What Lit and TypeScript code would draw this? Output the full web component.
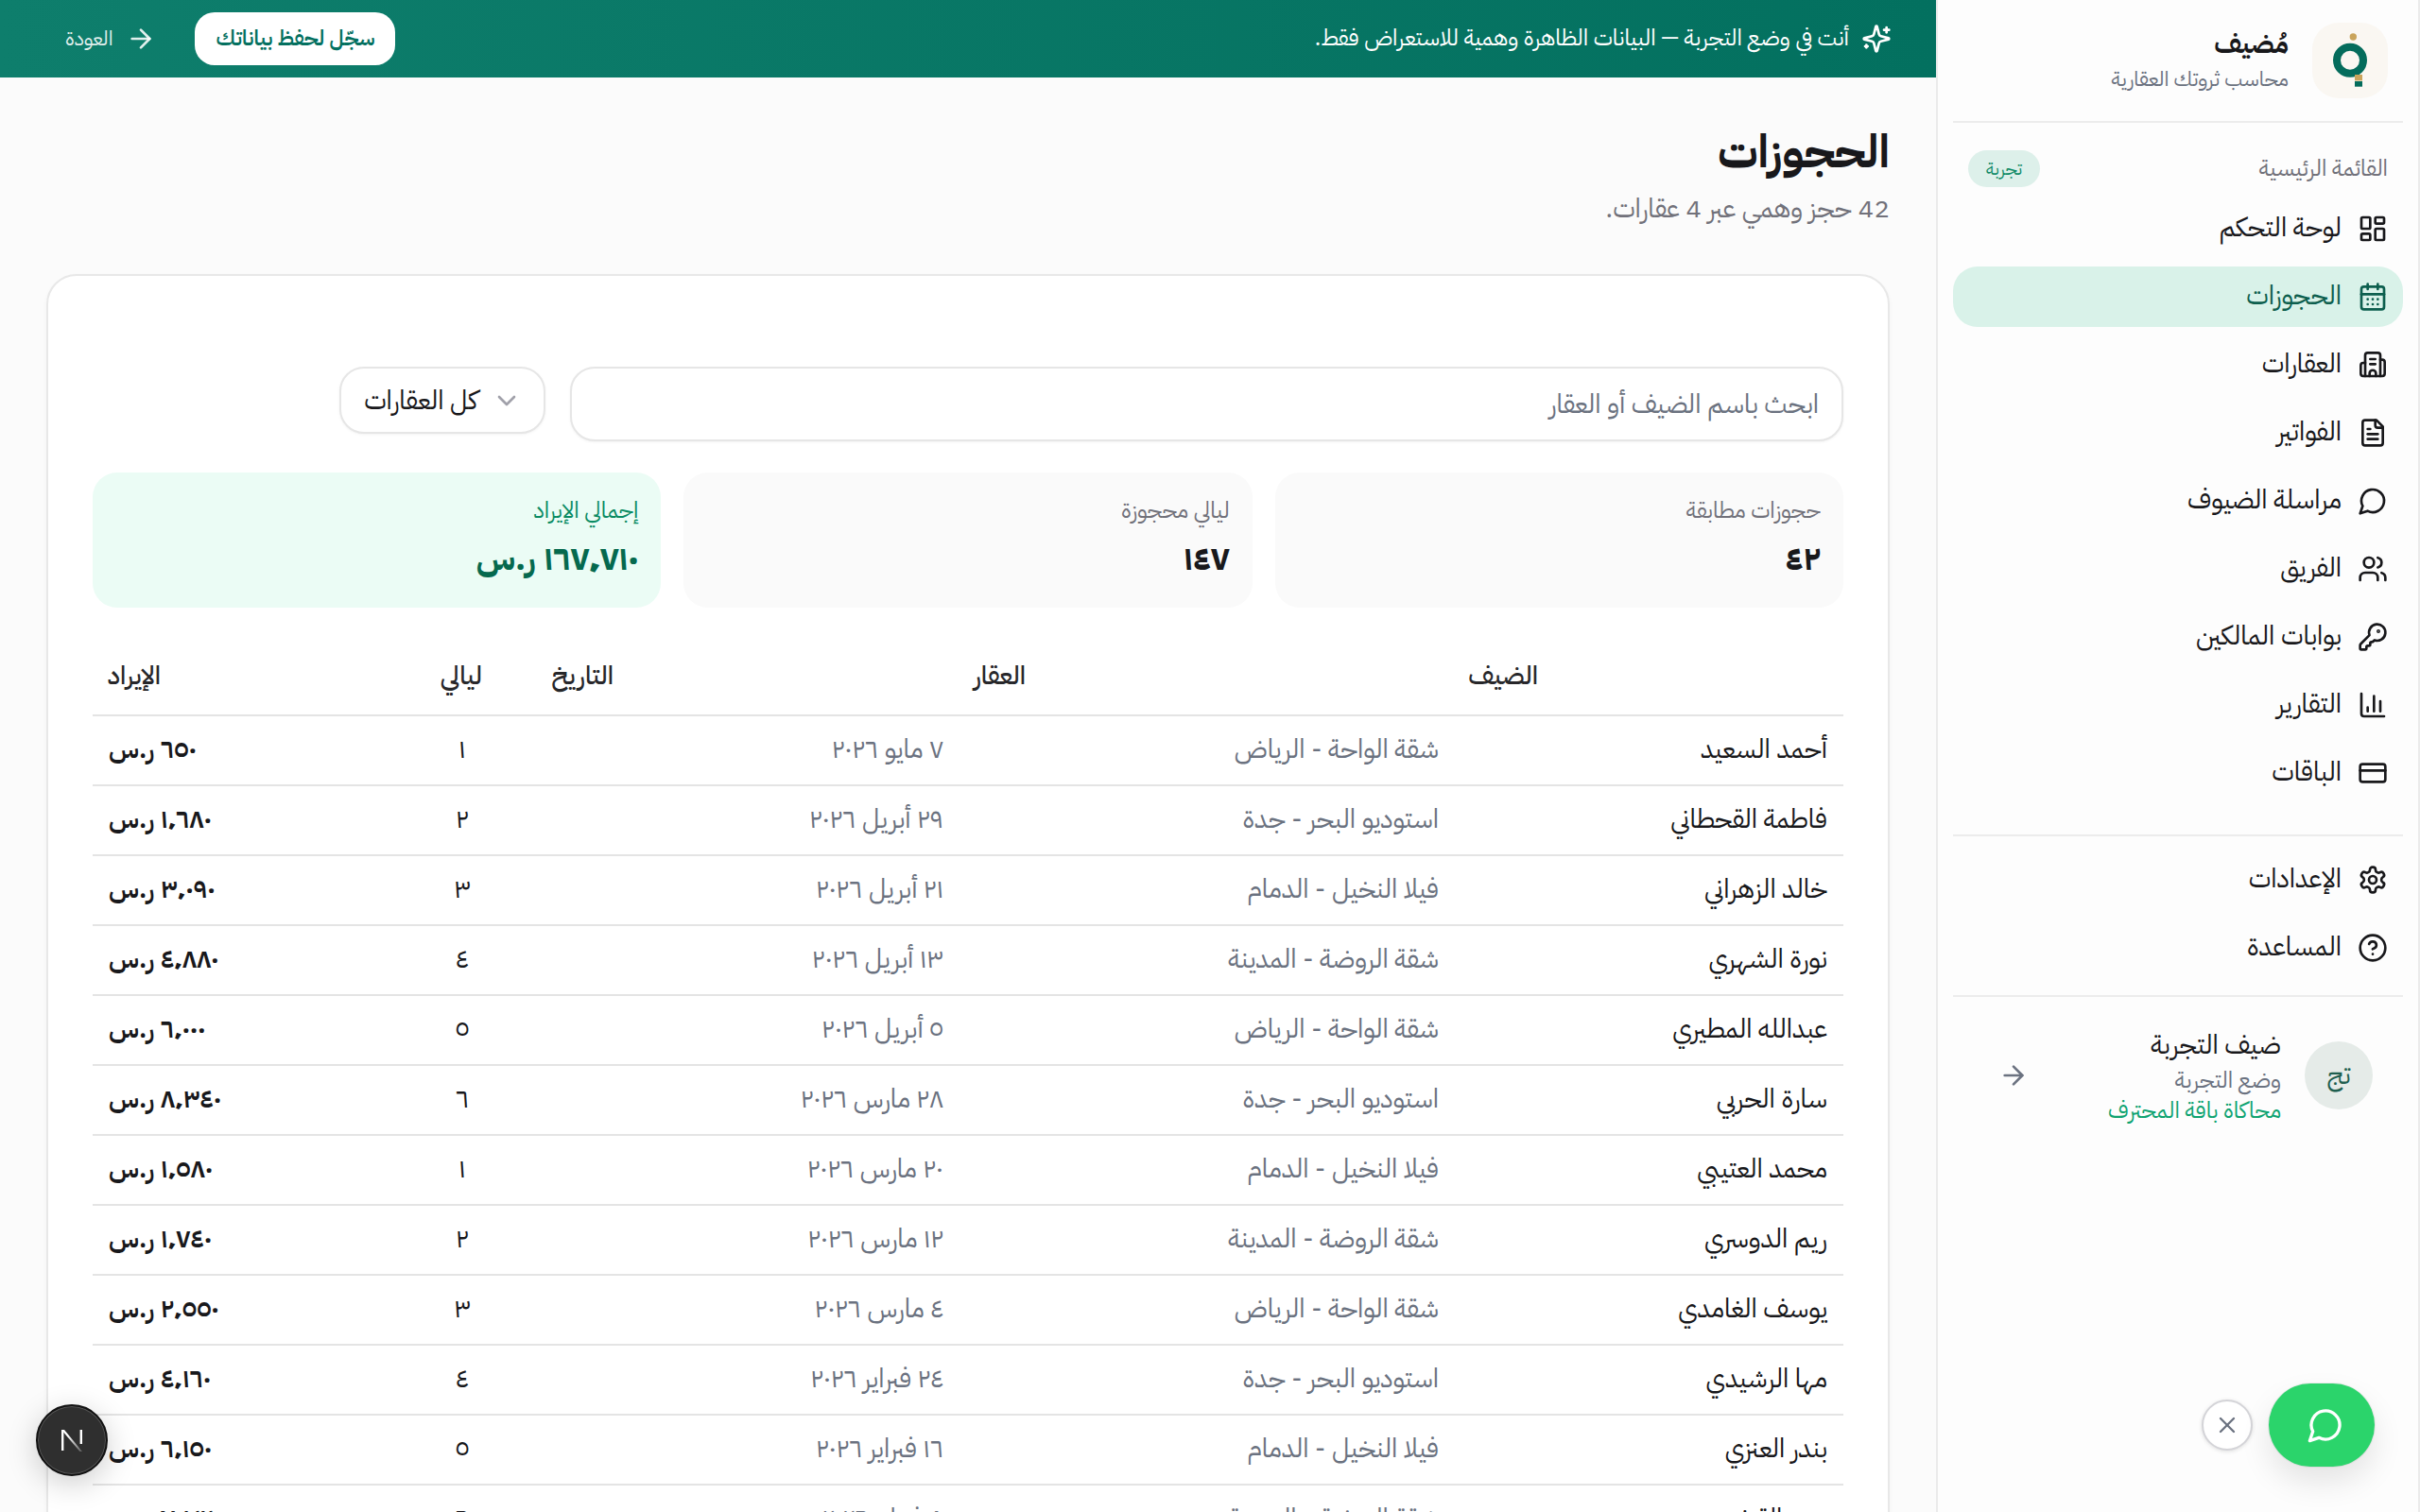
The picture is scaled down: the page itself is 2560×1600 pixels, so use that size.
import { LitElement, html, css, svg } from "lit";
import { customElement } from "lit/decorators.js";

const ic = (body: unknown) => html`<svg class="ic" viewBox="0 0 24 24" fill="none" stroke="currentColor" stroke-width="2" stroke-linecap="round" stroke-linejoin="round">${body}</svg>`;

const icons: Record<string, unknown> = {
  dash: ic(svg`<rect x="3" y="3" width="7" height="9" rx="1"/><rect x="14" y="3" width="7" height="5" rx="1"/><rect x="14" y="12" width="7" height="9" rx="1"/><rect x="3" y="16" width="7" height="5" rx="1"/>`),
  cal: ic(svg`<path d="M8 2v4"/><path d="M16 2v4"/><rect x="3" y="4" width="18" height="18" rx="2"/><path d="M3 10h18"/><path d="M8 14h.01"/><path d="M12 14h.01"/><path d="M16 14h.01"/><path d="M8 18h.01"/><path d="M12 18h.01"/><path d="M16 18h.01"/>`),
  bld: ic(svg`<path d="M6 21V4.5a2 2 0 0 1 2-2h8a2 2 0 0 1 2 2V21"/><path d="M6 10.5H4.5a2 2 0 0 0-2 2V19a2 2 0 0 0 2 2h15a2 2 0 0 0 2-2v-9a2 2 0 0 0-2-2H18"/><path d="M10 7.5h4"/><path d="M10 11.5h4"/><path d="M9.5 21v-2.2a2.5 2.5 0 0 1 5 0V21"/>`),
  file: ic(svg`<path d="M15 2H6a2 2 0 0 0-2 2v16a2 2 0 0 0 2 2h12a2 2 0 0 0 2-2V7Z"/><path d="M14 2v4a2 2 0 0 0 2 2h4"/><path d="M10 9H8"/><path d="M16 13H8"/><path d="M16 17H8"/>`),
  msg: ic(svg`<path d="M7.9 20A9 9 0 1 0 4 16.1L2 22Z"/>`),
  users: ic(svg`<path d="M16 21v-2a4 4 0 0 0-4-4H6a4 4 0 0 0-4 4v2"/><circle cx="9" cy="7" r="4"/><path d="M22 21v-2a4 4 0 0 0-3-3.87"/><path d="M16 3.13a4 4 0 0 1 0 7.75"/>`),
  key: ic(svg`<path d="M2.586 17.414A2 2 0 0 0 2 18.828V21a1 1 0 0 0 1 1h3a1 1 0 0 0 1-1v-1a1 1 0 0 1 1-1h1a1 1 0 0 0 1-1v-1a1 1 0 0 1 1-1h.172a2 2 0 0 0 1.414-.586l.814-.814a6.5 6.5 0 1 0-4-4z"/><circle cx="16.5" cy="7.5" r=".5" fill="currentColor"/>`),
  chart: ic(svg`<path d="M3 3v16a2 2 0 0 0 2 2h16"/><path d="M18 17V9"/><path d="M13 17V5"/><path d="M8 17v-3"/>`),
  card: ic(svg`<rect x="2" y="5" width="20" height="14" rx="2"/><line x1="2" x2="22" y1="10" y2="10"/>`),
  gear: ic(svg`<path d="M12.22 2h-.44a2 2 0 0 0-2 2v.18a2 2 0 0 1-1 1.73l-.43.25a2 2 0 0 1-2 0l-.15-.08a2 2 0 0 0-2.73.73l-.22.38a2 2 0 0 0 .73 2.73l.15.1a2 2 0 0 1 1 1.72v.51a2 2 0 0 1-1 1.74l-.15.09a2 2 0 0 0-.73 2.73l.22.38a2 2 0 0 0 2.73.73l.15-.08a2 2 0 0 1 2 0l.43.25a2 2 0 0 1 1 1.73V20a2 2 0 0 0 2 2h.44a2 2 0 0 0 2-2v-.18a2 2 0 0 1 1-1.73l.43-.25a2 2 0 0 1 2 0l.15.08a2 2 0 0 0 2.73-.73l.22-.39a2 2 0 0 0-.73-2.73l-.15-.08a2 2 0 0 1-1-1.74v-.5a2 2 0 0 1 1-1.74l.15-.09a2 2 0 0 0 .73-2.73l-.22-.38a2 2 0 0 0-2.73-.73l-.15.08a2 2 0 0 1-2 0l-.43-.25a2 2 0 0 1-1-1.73V4a2 2 0 0 0-2-2z"/><circle cx="12" cy="12" r="3"/>`),
  help: ic(svg`<circle cx="12" cy="12" r="10"/><path d="M9.09 9a3 3 0 0 1 5.83 1c0 2-3 3-3 3"/><path d="M12 17h.01"/>`),
  arrow: ic(svg`<path d="M5 12h14"/><path d="m12 5 7 7-7 7"/>`),
  spark: ic(svg`<path d="M9.937 15.5A2 2 0 0 0 8.5 14.063l-6.135-1.582a.5.5 0 0 1 0-.962L8.5 9.936A2 2 0 0 0 9.937 8.5l1.582-6.135a.5.5 0 0 1 .963 0L14.063 8.5A2 2 0 0 0 15.5 9.937l6.135 1.581a.5.5 0 0 1 0 .964L15.5 14.063a2 2 0 0 0-1.437 1.437l-1.582 6.135a.5.5 0 0 1-.963 0z"/><path d="M20 3v4"/><path d="M22 5h-4"/><path d="M4 17v2"/><path d="M5 18H3"/>`),
  chev: ic(svg`<path d="m6 9 6 6 6-6"/>`),
  x: ic(svg`<path d="M18 6 6 18"/><path d="m6 6 12 12"/>`),
};

const mainNav = [
  ["dash", "لوحة التحكم"],
  ["cal", "الحجوزات"],
  ["bld", "العقارات"],
  ["file", "الفواتير"],
  ["msg", "مراسلة الضيوف"],
  ["users", "الفريق"],
  ["key", "بوابات المالكين"],
  ["chart", "التقارير"],
  ["card", "الباقات"],
];
const subNav = [
  ["gear", "الإعدادات"],
  ["help", "المساعدة"],
];

const bookings = [
  ["أحمد السعيد", "شقة الواحة - الرياض", "٧ مايو ٢٠٢٦", "١", "٦٥٠ ر.س"],
  ["فاطمة القحطاني", "استوديو البحر - جدة", "٢٩ أبريل ٢٠٢٦", "٢", "١٬٦٨٠ ر.س"],
  ["خالد الزهراني", "فيلا النخيل - الدمام", "٢١ أبريل ٢٠٢٦", "٣", "٣٬٠٩٠ ر.س"],
  ["نورة الشهري", "شقة الروضة - المدينة", "١٣ أبريل ٢٠٢٦", "٤", "٤٬٨٨٠ ر.س"],
  ["عبدالله المطيري", "شقة الواحة - الرياض", "٥ أبريل ٢٠٢٦", "٥", "٦٬٠٠٠ ر.س"],
  ["سارة الحربي", "استوديو البحر - جدة", "٢٨ مارس ٢٠٢٦", "٦", "٨٬٣٤٠ ر.س"],
  ["محمد العتيبي", "فيلا النخيل - الدمام", "٢٠ مارس ٢٠٢٦", "١", "١٬٥٨٠ ر.س"],
  ["ريم الدوسري", "شقة الروضة - المدينة", "١٢ مارس ٢٠٢٦", "٢", "١٬٧٤٠ ر.س"],
  ["يوسف الغامدي", "شقة الواحة - الرياض", "٤ مارس ٢٠٢٦", "٣", "٢٬٥٥٠ ر.س"],
  ["مها الرشيدي", "استوديو البحر - جدة", "٢٤ فبراير ٢٠٢٦", "٤", "٤٬١٦٠ ر.س"],
  ["بندر العنزي", "فيلا النخيل - الدمام", "١٦ فبراير ٢٠٢٦", "٥", "٦٬١٥٠ ر.س"],
  ["هند القرني", "شقة الروضة - المدينة", "٨ فبراير ٢٠٢٦", "٦", "٧٬٣٢٠ ر.س"],
];

@customElement("app-root")
export class AppRoot extends LitElement {
  static styles = css`
    :host {
      display: block;
      direction: rtl;
      width: 2560px;
      height: 1600px;
      overflow: hidden;
      position: relative;
      background: #fbfbfb;
      color: #18181b;
      font-family: "IBM Plex Sans Arabic", "Noto Sans Arabic", "Noto Sans", sans-serif;
    }
    * { box-sizing: border-box; }
    .ic { display: block; width: 100%; height: 100%; flex: none; }
    .shell { display: flex; height: 1600px; }

    /* sidebar */
    .side {
      width: 512px;
      flex: none;
      background: #fdfdfd;
      border-left: 2px solid #ebebeb;
      border-right: 2px solid #ebebeb;
      display: flex;
      flex-direction: column;
      padding: 0 16px;
    }
    .brand { display: flex; align-items: center; gap: 25px; padding: 24px 16px 24px 0; border-bottom: 2px solid #ececec; box-sizing: content-box; height: 80px; }
    .logo { width: 80px; height: 80px; border-radius: 28px; background: #faf7f2; flex: none; }
    .logo svg { display: block; width: 80px; height: 80px; }
    .brand-t { font-size: 28px; font-weight: 700; line-height: 40px; }
    .brand-s { font-size: 22px; color: #6b7280; line-height: 34px; }
    .sec { display: flex; justify-content: space-between; align-items: center; height: 40px; margin-top: 28px; padding: 0 16px; }
    .sec-l { font-size: 24px; color: #71717a; }
    .badge { width: 76px; height: 39px; border-radius: 20px; background: #ddf0ea; color: #0f8a66; font-size: 19px; display: flex; align-items: center; justify-content: center; }
    .nav { display: flex; flex-direction: column; gap: 8px; }
    .nav.top { margin-top: 12px; padding-bottom: 33px; border-bottom: 2px solid #ececec; }
    .nav.low { margin-top: 14px; padding-bottom: 18px; border-bottom: 2px solid #ececec; }
    .item { height: 64px; border-radius: 26px; padding: 0 16px; display: flex; align-items: center; gap: 17px; font-size: 28px; color: #18181b; }
    .item > span:last-child { padding-bottom: 2px; }
    .item.on { background: #d9f2e9; color: #0d5f4e; }
    .item .i { width: 32px; height: 32px; flex: none; }
    .user { display: flex; align-items: center; gap: 25px; padding: 31px 32px 0 48px; }
    .av { width: 72px; height: 72px; border-radius: 50%; background: #e5ebe8; color: #1f5f4f; display: flex; align-items: center; justify-content: center; font-size: 28px; flex: none; }
    .u-n { font-size: 28px; line-height: 40px; }
    .u-s { font-size: 24px; line-height: 34px; color: #6b7280; }
    .u-p { font-size: 24px; line-height: 30px; color: #0ea371; }
    .u-go { width: 32px; height: 32px; color: #6b7280; margin-right: auto; }

    /* main */
    .main { flex: 1; min-width: 0; display: flex; flex-direction: column; }
    .banner {
      height: 82px; flex: none;
      background: linear-gradient(to left, #03705f, #0e7e6c);
      color: #fff;
      display: flex; align-items: center; gap: 13px;
      padding: 0 47px 0 49px;
    }
    .b-i { width: 32px; height: 32px; flex: none; }
    .b-t { font-size: 24px; flex: 1; padding-bottom: 2px; }
    .b-btn { height: 56px; width: 212px; background: #fff; color: #04705f; border-radius: 21px; font-size: 22.4px; font-weight: 600; display: flex; align-items: center; justify-content: center; margin-left: 8px; padding-bottom: 2px; }
    .b-back { display: flex; align-items: center; gap: 14px; font-size: 21.6px; color: rgba(255,255,255,.88); padding: 0 20px; }
    .b-back .a { width: 32px; height: 32px; flex: none; }
    .page { padding: 47px 49px 0; flex: 1; min-height: 0; }
    h1 { margin: 0; font-size: 48px; line-height: 64px; font-weight: 700; color: #18181b; }
    .sub { font-size: 28px; line-height: 36px; color: #71717a; margin-top: 10px; }
    .box { margin-top: 51px; height: 1400px; border: 2px solid #e8e8e8; border-radius: 32px; background: #fff; padding: 96px 47px 0; box-shadow: 0 2px 4px rgba(0,0,0,.04); }
    .ctl { display: flex; gap: 26px; align-items: flex-start; }
    .search { width: 1347px; flex: none; height: 79px; border: 2px solid #e6e6e6; border-radius: 26px; display: flex; align-items: center; padding: 0 24px; font-size: 28px; color: #6b7280; background: #fff; box-shadow: 0 1px 3px rgba(0,0,0,.05); }
    .select { width: 218px; height: 71px; flex: none; border: 2px solid #e6e6e6; border-radius: 26px; display: flex; align-items: center; gap: 15px; padding: 0 23px; font-size: 28px; color: #18181b; background: #fff; box-shadow: 0 1px 3px rgba(0,0,0,.05); }
    .select .c { width: 32px; height: 32px; color: #a1a1aa; flex: none; }
    .stats { display: grid; grid-template-columns: repeat(3, 1fr); gap: 24px; margin-top: 33px; }
    .stat { height: 143px; border-radius: 26px; background: #fafafa; padding: 21px 24px 0; }
    .stat-l { font-size: 24px; line-height: 38px; color: #71717a; }
    .stat-v { font-size: 36px; line-height: 50px; font-weight: 700; color: #18181b; margin-top: 7px; }
    .stat.g { background: #ebfcf5; }
    .stat.g .stat-l { color: #0a8b63; }
    .stat.g .stat-v { color: #05694e; }
    .thead { display: grid; grid-template-columns: 865px 436px 139px 340px 72px; height: 80px; padding-bottom: 4px; align-items: center; margin-top: 33px; border-bottom: 2px solid #e4e4e4; box-sizing: content-box; font-size: 27.2px; color: #27272a; font-weight: 500; }
    .thead > :first-child { padding-right: 323px; }
    .thead { height: 76px; }
    .tr { display: grid; grid-template-columns: 411px 524px 378px 262px 243px; height: 74px; align-items: center; padding: 0 17px 2px; border-bottom: 2px solid #e4e4e4; font-size: 28px; color: #18181b; }
    .p, .d { color: #6b7280; }
    .n { text-align: center; }
    .r { text-align: left; font-weight: 600; }

    /* overlays */
    .fab { position: absolute; left: 2400px; top: 1464px; width: 112px; height: 88px; border-radius: 44px; background: #2bd46b; color: #fff; display: flex; align-items: center; justify-content: center; padding-left: 8px; box-shadow: 0 0 0 1px rgba(0,0,0,.06), 0 16px 32px rgba(0,0,0,.1); }
    .fab .i { width: 40px; height: 40px; }
    .close { position: absolute; left: 2329px; top: 1481px; width: 54px; height: 54px; border-radius: 50%; background: #fff; border: 2px solid #d4d4d8; color: #6b7280; display: flex; align-items: center; justify-content: center; box-shadow: 0 1px 4px rgba(0,0,0,.12); }
    .close .i { width: 28px; height: 28px; }
    .next { position: absolute; left: 38px; top: 1486px; width: 76px; height: 76px; border-radius: 50%; background: #2f2f2f; border: 2px solid #111; box-shadow: 0 0 0 1px #555 inset, 0 8px 32px rgba(0,0,0,.2); direction: ltr; display: flex; align-items: center; justify-content: center; }
    .next svg { width: 34px; height: 34px; display: block; }
  `;

  private nav(items: string[][], active = "") {
    return items.map(
      ([k, t]) => html`<div class="item ${k === active ? "on" : ""}"><span class="i">${icons[k]}</span><span>${t}</span></div>`
    );
  }

  render() {
    return html`
      <div class="shell">
        <aside class="side">
          <div class="brand">
            <div class="logo">
              <svg viewBox="0 0 80 80">
                <circle cx="40" cy="39.7" r="14" fill="none" stroke="#046c5c" stroke-width="8"/>
                <circle cx="43.3" cy="15" r="3.7" fill="#c9a45c"/>
                <rect x="45" y="55" width="8" height="6.4" fill="#c9a45c"/>
                <rect x="45" y="62" width="8" height="5.7" fill="#046c5c"/>
              </svg>
            </div>
            <div>
              <div class="brand-t">مُضيف</div>
              <div class="brand-s">محاسب ثروتك العقارية</div>
            </div>
          </div>
          <div class="sec"><span class="sec-l">القائمة الرئيسية</span><span class="badge">تجربة</span></div>
          <nav class="nav top">${this.nav(mainNav, "cal")}</nav>
          <nav class="nav low">${this.nav(subNav)}</nav>
          <div class="user">
            <div class="av">تج</div>
            <div>
              <div class="u-n">ضيف التجربة</div>
              <div class="u-s">وضع التجربة</div>
              <div class="u-p">محاكاة باقة المحترف</div>
            </div>
            <span class="u-go">${icons.arrow}</span>
          </div>
        </aside>

        <main class="main">
          <div class="banner">
            <span class="b-i">${icons.spark}</span>
            <span class="b-t">أنت في وضع التجربة — البيانات الظاهرة وهمية للاستعراض فقط.</span>
            <span class="b-btn">سجّل لحفظ بياناتك</span>
            <span class="b-back"><span class="a">${icons.arrow}</span><span>العودة</span></span>
          </div>
          <div class="page">
            <h1>الحجوزات</h1>
            <div class="sub">42 حجز وهمي عبر 4 عقارات.</div>
            <section class="box">
              <div class="ctl">
                <div class="search">ابحث باسم الضيف أو العقار</div>
                <div class="select"><span class="c">${icons.chev}</span><span>كل العقارات</span></div>
              </div>
              <div class="stats">
                <div class="stat"><div class="stat-l">حجوزات مطابقة</div><div class="stat-v">٤٢</div></div>
                <div class="stat"><div class="stat-l">ليالي محجوزة</div><div class="stat-v">١٤٧</div></div>
                <div class="stat g"><div class="stat-l">إجمالي الإيراد</div><div class="stat-v">١٦٧٬٧١٠ ر.س</div></div>
              </div>
              <div class="thead"><span>الضيف</span><span>العقار</span><span>التاريخ</span><span>ليالي</span><span>الإيراد</span></div>
              ${bookings.map(
                ([n, p, d, c, r]) => html`<div class="tr"><span>${n}</span><span class="p">${p}</span><span class="d">${d}</span><span class="n">${c}</span><span class="r">${r}</span></div>`
              )}
            </section>
          </div>
        </main>
      </div>
      <div class="close"><span class="i">${icons.x}</span></div>
      <div class="fab"><span class="i">${icons.msg}</span></div>
      <div class="next">
        <svg viewBox="0 0 34 34">
          <defs><linearGradient id="ng" x1="0" y1="0" x2="1" y2="1"><stop offset="0.3" stop-color="#fff"/><stop offset="1" stop-color="#fff" stop-opacity=".2"/></linearGradient></defs>
          <rect x="6" y="6" width="2.4" height="22" fill="#fff"/>
          <polygon points="6,6 9,6 28,29 25.5,29" fill="url(#ng)"/>
          <rect x="25.6" y="6" width="2.4" height="15" fill="#fff"/>
        </svg>
      </div>
    `;
  }
}
